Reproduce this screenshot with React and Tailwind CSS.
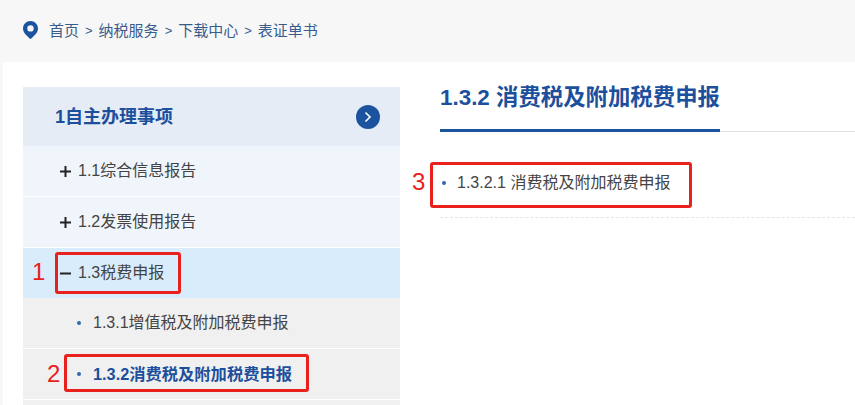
const FONT = { fontFamily: '"Liberation Sans", "Noto Sans CJK SC", sans-serif' };

function Note({ n, className }) {
  return <span className={`absolute text-[24px] leading-[28px] text-[#e8211c] ${className}`}>{n}</span>;
}
function Box({ className }) {
  return <div className={`absolute border-[3px] border-[#e8211c] rounded-[3px] ${className}`} />;
}
function Row({ sign, children, active }) {
  return (
    <div className={`flex items-center pl-[37px] text-[16px] text-[#444444] ${active ? "h-[50px] bg-[#d9ecfb]" : "h-[51px] border-b border-white bg-[#f0f5fb]"}`}>
      <span className="w-[18px] flex justify-start">
        {sign === "+" ? (
          <svg width="11" height="11" viewBox="0 0 11 11"><path d="M0 5.500h11M5.500 0v11" stroke="#222" strokeWidth="2" /></svg>
        ) : (
          <svg width="11" height="11" viewBox="0 0 11 11"><path d="M0 5.500h11" stroke="#222" strokeWidth="2" /></svg>
        )}
      </span>
      {children}
    </div>
  );
}
function Sub({ active, children }) {
  return (
    <div className={`h-[51px] border-b border-white flex items-center pl-[54px] bg-[#f0f0f0] ${active ? "text-[16.300px] font-bold text-[#1c4f9c]" : "text-[16px] text-[#444444]"}`}>
      <span className="w-[4px] h-[4px] rounded-full bg-[#2f6aa8] mr-[12px]" />
      {children}
    </div>
  );
}

export default function App() {
  return (
    <div style={FONT} className="relative w-[855px] h-[405px] overflow-hidden bg-[#f7f7f8]">
      <div className="h-[62px] flex items-center pl-[23px] text-[15px] text-[#3a5c8c]">
        <svg width="15" height="18" viewBox="0 0 15 18" className="mr-[11px] -mt-[2px]">
          <path fillRule="evenodd" fill="#1c539f" d="M7.500 0C3.400 0 0 3.300 0 7.400 0 11.800 4.600 15.600 7.500 18c2.900-2.400 7.500-6.200 7.500-10.600C15 3.300 11.600 0 7.500 0zm0 4.200a3.200 3.200 0 1 1 0 6.400 3.200 3.200 0 0 1 0-6.400z" />
        </svg>
        <span>首页</span>
        <span className="mx-[6px] text-[13px]">&gt;</span>
        <span>纳税服务</span>
        <span className="mx-[6px] text-[13px]">&gt;</span>
        <span>下载中心</span>
        <span className="mx-[6px] text-[13px]">&gt;</span>
        <span>表证单书</span>
      </div>

      <div className="ml-[3px] h-[343px] bg-white flex pl-[20px] pt-[25px]">
        <div className="w-[377px] flex flex-col shrink-0">
          <div className="h-[59px] flex items-center justify-between pl-[32px] pr-[20px] bg-[#e5ecf5] text-[18px] font-bold text-[#1c4f9c]">
            <span className="pt-[2px]">1自主办理事项</span>
            <span className="w-[24px] h-[24px] rounded-full bg-[#1c539f] flex items-center justify-center">
              <svg width="8" height="12" viewBox="0 0 8 12"><path d="M1.500 1.500 6 6l-4.500 4.500" fill="none" stroke="#fff" strokeWidth="1.600" /></svg>
            </span>
          </div>
          <Row sign="+">1.1综合信息报告</Row>
          <Row sign="+">1.2发票使用报告</Row>
          <Row sign="-" active>1.3税费申报</Row>
          <Sub>1.3.1增值税及附加税费申报</Sub>
          <Sub active>1.3.2消费税及附加税费申报</Sub>
          <div className="h-[5px] bg-[#f0f0f0]" />
        </div>

        <div className="ml-[40px] flex-1 -mt-[25px] pt-[19px]">
          <div className="border-b border-[#e2e2e2] h-[51px]">
            <div className="inline-block h-[51px] border-b-[3px] border-[#1c539f] text-[22.400px] leading-[32px] pt-[1px] font-bold text-[#1c4f9c]">
              1.3.2 消费税及附加税费申报
            </div>
          </div>
          <div className="h-[86px] pt-[16px] flex items-center border-b border-dashed border-[#e4e4e4] text-[16px] text-[#444444]">
            <span className="w-[4px] h-[4px] rounded-full bg-[#2f6aa8] ml-[2px] mr-[11px]" />
            1.3.2.1 消费税及附加税费申报
          </div>
        </div>
      </div>

      <Box className="left-[55px] top-[252px] w-[126px] h-[42px]" />
      <Box className="left-[64px] top-[354px] w-[245px] h-[38px]" />
      <Box className="left-[430px] top-[162px] w-[262px] h-[46px]" />
      <Note n="1" className="left-[32px] top-[258px]" />
      <Note n="2" className="left-[47px] top-[360px]" />
      <Note n="3" className="left-[412px] top-[168px]" />
    </div>
  );
}
